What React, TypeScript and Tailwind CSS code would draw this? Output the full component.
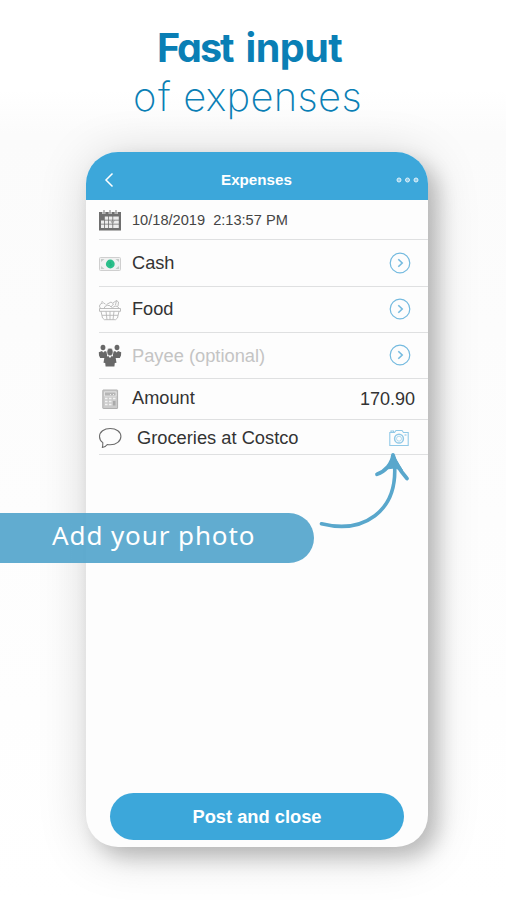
import type { ReactNode } from "react";

const sans = "font-['Liberation_Sans',Arial,sans-serif]";

function CalendarIcon() {
  return (
    <svg width="24" height="24" viewBox="0 0 24 24" fill="none">
      <path d="M1 4h22v18.500H1z" fill="#6f6f6f" />
      <path d="M6.800 8.500h3.400v3.200H6.800zM11 8.500h3.400v3.200H11zM15.200 8.500h5.600v3.200h-5.600zM3 12.500h3v3.200H3zM6.800 12.500h3.400v3.200H6.800zM11 12.500h3.400v3.200H11zM15.200 12.500h5.600v3.200h-5.600zM3 16.500h3v3.500H3zM6.800 16.500h3.400V20H6.800zM11 16.500h3.400V20H11zM15.200 16.500h5.600V20h-5.600z" fill="#ececec" />
      <path d="M4 5h3.500M10.500 5H14M16.500 5H20" stroke="#ddd" strokeWidth="1.300" />
      <path d="M6 2v3.500M12 2v3.500M18 2v3.500" stroke="#999" strokeWidth="1.300" />
      <path d="m13 13 1.500 2.500 2-3.500" stroke="#999" />
    </svg>
  );
}

function CashIcon() {
  return (
    <svg width="24" height="24" viewBox="0 0 24 24" fill="none">
      <rect x="1.500" y="5.500" width="21" height="13" rx="1" fill="#f1f1f1" stroke="#cfcfcf" />
      <path d="M3 10V7h3.500L3 10ZM21 10V7h-3.500L21 10ZM3 14v3h3.500L3 14ZM21 14v3h-3.500L21 14Z" fill="#c4cbc8" />
      <circle cx="12.300" cy="12" r="4.400" fill="#2bbf8a" />
      <path d="M13 10.200c-2 0-1.700 1.500-.6 1.700 1.700.3 1.200 2-.9 1.800" stroke="#1dab7b" strokeWidth=".7" />
    </svg>
  );
}

function BasketIcon() {
  return (
    <svg width="24" height="24" viewBox="0 0 24 24" fill="none" stroke="#b5b5b5" strokeWidth=".9">
      <path d="M1.500 10.500h21v2.800h-21zM3 13.300l1.500 6.700 2 1.700h11l2-1.700 1.500-6.700M4 17.300h16M8 13.300l1 8.400M16 13.300l-1 8.400M12 13.300v8.400" />
      <path d="M2.500 10.500a3.300 3.300 0 1 1 5-4.300M6 10.500a4 4 0 0 1 7.500-1M3.500 4.500l1-1.500M8.500 6.500 13 4l2.500 2-2.500 3M14.500 10a3.500 3.500 0 0 1 6.500.5M15 5l3.500-2.500M17.500 7l1-4.500 2 1.500-.5 4" />
    </svg>
  );
}

function PeopleIcon() {
  return (
    <svg width="24" height="24" viewBox="0 0 24 24" fill="#686868">
      <ellipse cx="5" cy="3.500" rx="2.400" ry="2.700" />
      <ellipse cx="19" cy="3.500" rx="2.400" ry="2.700" />
      <path d="M.8 8.300 4 7l1.200 1.600L7 7l2 1v6H2.200L1 11.500ZM23.200 8.300 20 7l-1.200 1.600L17 7l-2 1v6h6.800L23 11.500Z" />
      <ellipse cx="12" cy="8" rx="3.200" ry="3.900" stroke="#fafafa" strokeWidth=".7" />
      <path d="M6.400 13.400 10.300 12l1.700 2 1.700-2 3.900 1.400.9 5.300-1.700.3-.4 3.500H7.600L7.200 19l-1.700-.3Z" />
    </svg>
  );
}

function CalculatorIcon() {
  return (
    <svg width="24" height="24" viewBox="0 0 24 24" fill="none">
      <rect x="4.800" y="3" width="14.800" height="18.500" rx=".5" fill="#cbcbcb" stroke="#b0b0b0" />
      <path d="M6.500 5h11.500v4H6.500z" fill="#b5b5b5" stroke="#eee" strokeWidth=".7" />
      <path d="M12 7.500h1M15 7.500h1" stroke="#eee" />
      <path d="M7 11.500h2.500M11 11.500h2.500M15 11.500h2.500M7 14.500h2.500M11 14.500h2.500M7 17.500h2.500M11 17.500h2.500" stroke="#f3f3f3" strokeWidth="1.400" />
      <path d="M15 14h2.500v4.500H15z" fill="#aaa" />
    </svg>
  );
}

function CommentIcon() {
  return (
    <svg width="24" height="24" viewBox="0 0 24 24" fill="none" stroke="#6b6b6b" strokeWidth="1.100" strokeLinejoin="round">
      <path d="M12.200 2.500C6.100 2.500 1.500 5.900 1.500 10.500c0 2.700 1.200 4.600 3.300 6.100 0 1.800.1 3.300-.5 4.900 2.300-.4 3.900-1.300 5-3 .9.200 1.900.3 2.900.3 6.100 0 10.700-3.700 10.700-8.300s-4.600-8-10.700-8Z" />
    </svg>
  );
}

function ChevronCircle() {
  return (
    <svg className="mr-px -mt-px" width="22" height="22" viewBox="0 0 22 22" fill="none" stroke="#74badf">
      <circle cx="11" cy="11" r="9.800" strokeWidth="1.200" />
      <path d="m9.300 7.200 3.900 3.800-3.900 3.800" strokeWidth="1.600" />
    </svg>
  );
}

function CameraIcon() {
  return (
    <svg className="mr-[3px]" width="20" height="18" viewBox="0 0 20 18" fill="none" stroke="#91c9e7" strokeWidth="1.100">
      <path d="M.8 3.500h4.700L7 1.500h6l1.500 2h4.700v13H.8ZM2 3.500V2h2.500v1.500" />
      <circle cx="10" cy="9.700" r="4.400" strokeWidth="1.500" />
      <circle cx="10" cy="9.700" r="2.500" strokeWidth=".7" />
      <path d="M15.500 6h2" />
    </svg>
  );
}

function Row({ icon, height, children, right }: { icon: ReactNode; height: string; children: ReactNode; right?: ReactNode }) {
  return (
    <div className={`ml-[13px] flex items-center border-b-[1.5px] border-[#dfe0e1] pr-4 ${height}`}>
      <span className="w-[34px] shrink-0 -ml-px">{icon}</span>
      <div className="flex-1 whitespace-nowrap">{children}</div>
      {right}
    </div>
  );
}

export default function App() {
  return (
    <main className={`relative flex h-[900px] w-[506px] flex-col overflow-hidden bg-linear-to-b from-white from-10% via-[#fbfbfb] via-15% to-white ${sans}`}>
      <h1 className="flex h-[152px] flex-col items-start pt-[24px] font-['Inter',sans-serif] whitespace-nowrap text-[#0a7fb5] [font-feature-settings:'cv11']">
        <span className="flex h-[49px] gap-[13px] pl-[157px] text-[39.500px] leading-[49px] font-bold">
          <span className="tracking-[-2px]">Fast</span>{" "}
          <span className="tracking-[-0.5px]">input</span>
        </span>
        <span className="flex h-[49px] gap-[11px] pl-[133px] text-[40px] leading-[47px] font-[250]">
          <span className="tracking-[1.5px]">of</span>{" "}
          <span className="tracking-[0.3px]">expenses</span>
        </span>
      </h1>

      <section className="ml-[86px] flex h-[695px] w-[342px] flex-col overflow-hidden rounded-[32px] bg-[#fdfdfd] shadow-[10px_10px_20px_rgba(0,0,0,0.20),2px_6px_50px_rgba(0,0,0,0.17)]">
        <header className="flex h-12 shrink-0 items-center bg-[#3ca7da] pt-[8px] pr-[9px] pl-[18px] text-white">
          <svg width="32" height="18" viewBox="0 0 32 18" fill="none" stroke="white" strokeWidth="1.500">
            <path d="M8.500 2.500 2 9l6.500 6.500" />
          </svg>
          <h2 className="ml-[85px] text-[15.2px] font-bold">Expenses</h2>
          <svg className="ml-auto" width="24" height="8" viewBox="0 0 24 8" fill="#8fcdea" stroke="#e0f1fa">
            <circle cx="4" cy="4" r="2" />
            <circle cx="12.500" cy="4" r="2" />
            <circle cx="21" cy="4" r="2" />
          </svg>
        </header>

        <Row icon={<CalendarIcon />} height="h-[40px]">
          <span className="text-[14.6px] text-[#444] whitespace-pre">10/18/2019  2:13:57 PM</span>
        </Row>
        <Row icon={<CashIcon />} height="h-[46.500px] pt-[2px]" right={<ChevronCircle />}>
          <span className="text-[18.200px] text-[#333]">Cash</span>
        </Row>
        <Row icon={<BasketIcon />} height="h-[46px] pt-px" right={<ChevronCircle />}>
          <span className="text-[18.200px] text-[#333]">Food</span>
        </Row>
        <Row icon={<PeopleIcon />} height="h-[46.500px] pt-px" right={<ChevronCircle />}>
          <span className="text-[18.300px] text-[#c4c4c4]">Payee (optional)</span>
        </Row>
        <Row icon={<CalculatorIcon />} height="h-[41px]" right={<span className="-mr-[3px] text-[18px] text-[#333]">170.90</span>}>
          <span className="text-[18.200px] text-[#333]">Amount</span>
        </Row>
        <Row icon={<CommentIcon />} height="h-[35px] pt-px" right={<CameraIcon />}>
          <span className="pl-[5px] text-[18.300px] text-[#333]">Groceries at Costco</span>
        </Row>

        <button className="mt-auto mb-[7px] ml-[24px] h-[47px] w-[294px] shrink-0 rounded-full bg-[#3ca7da] text-[18.300px] font-bold text-white">
          Post and close
        </button>
      </section>

      {/* Callout laid over the phone's edge */}
      <div className="absolute top-[513px] left-0 flex h-[50px] w-[314px] items-center rounded-r-full bg-[#54a5cc]/92 pb-[5px] pl-[52px] font-['Noto_Sans',sans-serif] text-[26px] tracking-[0.9px] whitespace-nowrap text-white">
        Add your photo
      </div>
      <svg className="absolute top-[450px] left-[316px]" width="98" height="82" viewBox="0 0 98 82" fill="none" stroke="#59a7cc" strokeLinecap="round" strokeLinejoin="round">
        <path d="M5.500 73.800C47 84 82 62 78.500 14" strokeWidth="3.600" />
        <path d="M61 24.300C69 21.500 76 14 77 5c2 8 7.500 16 14 23.500" strokeWidth="3.800" />
        <path d="M77 5 70.500 19l7.500-1 8 2Z" fill="#59a7cc" strokeWidth="1" />
      </svg>
    </main>
  );
}
